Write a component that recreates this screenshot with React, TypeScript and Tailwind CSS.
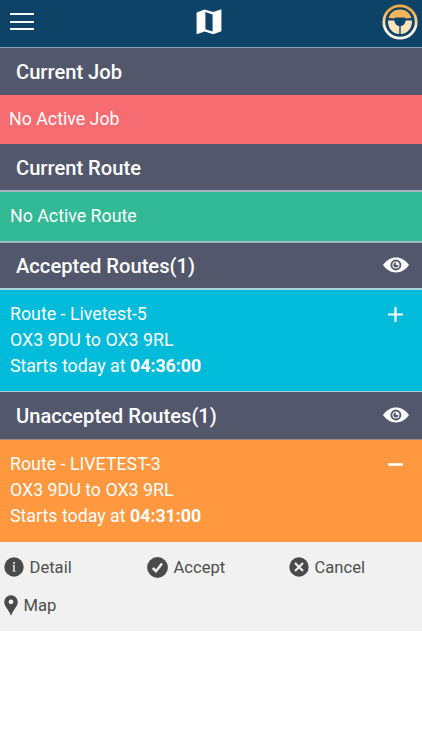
import type { ReactNode } from 'react';

const EyeIcon = () => (
    <svg width="26" height="16" viewBox="0 0 26 16" className="mb-[2px] block">
        <path d="M0 8C3.500 3 8 .4 13 .4S22.500 3 26 8c-3.500 5-8 7.400-13 7.400S3.500 13 0 8Z" fill="#fff" />
        <circle cx="12.900" cy="8" r="4.500" fill="#fff" stroke="#53576c" strokeWidth="1.900" />
        <path d="M12.900 5.500V8h2.500a2.500 2.500 0 1 1-2.500-2.500Z" fill="#53576c" />
    </svg>
);

const Logo = () => (
    <svg width="36" height="36" viewBox="0 0 36 36" className="block">
        <defs>
            <linearGradient id="ring" x1="0" y1="0" x2="0" y2="1">
                <stop offset="0.15" stopColor="#f3a745" />
                <stop offset="0.75" stopColor="#fdf6ea" />
            </linearGradient>
        </defs>
        <circle cx="18" cy="18" r="16.200" fill="none" stroke="url(#ring)" strokeWidth="2.800" />
        <path d="M6.500 14C8 8.500 12.500 5.400 18 5.400S28 8.500 29.500 14l-5.700.6c-.6-.8-1.200-1.100-2-1.100h-7.600c-.8 0-1.400.3-2 1.100Z" fill="#f5b45c" />
        <path d="M6 16.400h6.400c.2 3 1.800 5.200 4.900 5.600v8C10.600 29.600 5.600 24.200 6 16.400Z" fill="#fae3bd" />
        <path d="M30 16.400h-6.400c-.2 3-1.800 5.200-4.900 5.600v8c6.700-.4 11.700-5.800 11.300-13.600Z" fill="#fae3bd" />
    </svg>
);

const SectionHeader = ({ title, className, eye }: { title: string; className: string; eye?: boolean }) => (
    <div className={`flex items-center justify-between bg-[#53576c] pl-4 pr-[13px] ${className}`}>
        <h2 className="text-[20.150px] leading-6 font-medium">{title}</h2>
        {eye && <EyeIcon />}
    </div>
);

const RouteCard = ({ name, time, className, children }: { name: string; time: string; className: string; children: ReactNode }) => (
    <div className={`flex justify-between pl-[10px] pr-[19px] pt-[11px] text-[17.800px] leading-[26px] ${className}`}>
        <div>
            <p>Route - {name}</p>
            <p>OX3 9DU to OX3 9RL</p>
            <p>
                Starts today at <span className="font-bold">{time}</span>
            </p>
        </div>
        <svg width="15" height="15" viewBox="0 0 15 15" className="mt-[6px]">
            {children}
        </svg>
    </div>
);

export default function App() {
    return (
        <div className="min-h-screen w-full bg-white font-['Roboto',sans-serif] text-white">
            <header className="grid h-12 grid-cols-[1fr_auto_1fr] border-b border-[#8aa1b1] bg-[#0d4367]">
                <div className="ml-[10px] mt-[13px] flex h-[17px] w-6 flex-col justify-between">
                    <span className="h-[2px] bg-white" />
                    <span className="h-[2px] bg-white" />
                    <span className="h-[2px] bg-white" />
                </div>
                <svg width="26" height="26" viewBox="0 0 26 26" className="mr-1 mt-[9px]">
                    <path d="M.6 3.400 8.600.4l8.600 2.700L25.400.3v21.900l-8.200 3L8.600 22.400.6 25.200Z" fill="#fff" />
                    <path d="m9.400 3.100 7.200 2.300v17L9.400 20.200Z" fill="#0d4367" />
                </svg>
                <div className="mr-1 mt-1 justify-self-end">
                    <Logo />
                </div>
            </header>

            <SectionHeader title="Current Job" className="h-[47px]" />
            <div className="flex h-[49px] items-center bg-[#f76c71] pl-[9px] text-[17.800px]">No Active Job</div>

            <SectionHeader title="Current Route" className="h-12 border-b-2 border-[#a9b3bd] pt-[2px]" />
            <div className="flex h-[49px] items-center bg-[#32b996] pl-[10px] text-[17.800px]">No Active Route</div>

            <SectionHeader title="Accepted Routes(1)" className="h-[49px] border-y-2 border-t-[#9eb9be] border-b-[#a8d3de]" eye />
            <RouteCard name="Livetest-5" time="04:36:00" className="h-[101px] bg-[#00bbd9]">
                <path d="M7.500 0v15M0 7.500h15" stroke="#fff" strokeWidth="2.200" />
            </RouteCard>

            <SectionHeader title="Unaccepted Routes(1)" className="h-[49px] border-y border-t-[#a8d3de] border-b-[#a38b85]" eye />
            <RouteCard name="LIVETEST-3" time="04:31:00" className="h-[102px] bg-[#ff983f]">
                <path d="M0 7.500h15" stroke="#fff" strokeWidth="2.600" />
            </RouteCard>

            <div className="grid h-[89px] grid-cols-[143px_142px_1fr] grid-rows-[38px_38px] bg-[#f1f1f1] pl-1 pt-[6px] text-[16.600px] text-[#4e4e4e]">
                <div className="flex items-center">
                    <svg width="20" height="20" viewBox="0 0 20 20" className="mr-[5.500px]">
                        <circle cx="10" cy="10" r="9.700" fill="#4a4a4a" />
                        <path d="M8.500 8h2.200v5.700h.9v.8H8.400v-.8h.9V8.800h-.8Z" fill="#f1f1f1" />
                        <circle cx="10" cy="5.900" r="1" fill="#f1f1f1" />
                    </svg>
                    <span className="pt-[2px]">Detail</span>
                </div>
                <div className="flex items-center">
                    <svg width="21" height="21" viewBox="0 0 21 21" className="mr-[5.500px]">
                        <circle cx="10.500" cy="10.500" r="10.400" fill="#4a4a4a" />
                        <path d="m5.800 11 3.200 3.200 6-7.700" fill="none" stroke="#f1f1f1" strokeWidth="2.500" />
                    </svg>
                    <span className="pt-[2px]">Accept</span>
                </div>
                <div className="flex items-center">
                    <svg width="20" height="20" viewBox="0 0 20 20" className="mr-[5.500px]">
                        <circle cx="10" cy="10" r="9.700" fill="#4a4a4a" />
                        <path d="m6 6 8 8M14 6l-8 8" stroke="#f1f1f1" strokeWidth="2.200" />
                    </svg>
                    <span className="pt-[2px]">Cancel</span>
                </div>
                <div className="flex items-center">
                    <svg width="14" height="21" viewBox="0 0 14 21" className="mr-[5.500px]">
                        <path d="M7 .2A6.800 6.800 0 0 0 .2 7C.2 11 4.500 14.500 7 20.800 9.500 14.500 13.800 11 13.800 7A6.800 6.800 0 0 0 7 .2Z" fill="#4a4a4a" />
                        <circle cx="7" cy="6.800" r="2.400" fill="#f1f1f1" />
                    </svg>
                    <span className="pt-[2px]">Map</span>
                </div>
            </div>
        </div>
    );
}
